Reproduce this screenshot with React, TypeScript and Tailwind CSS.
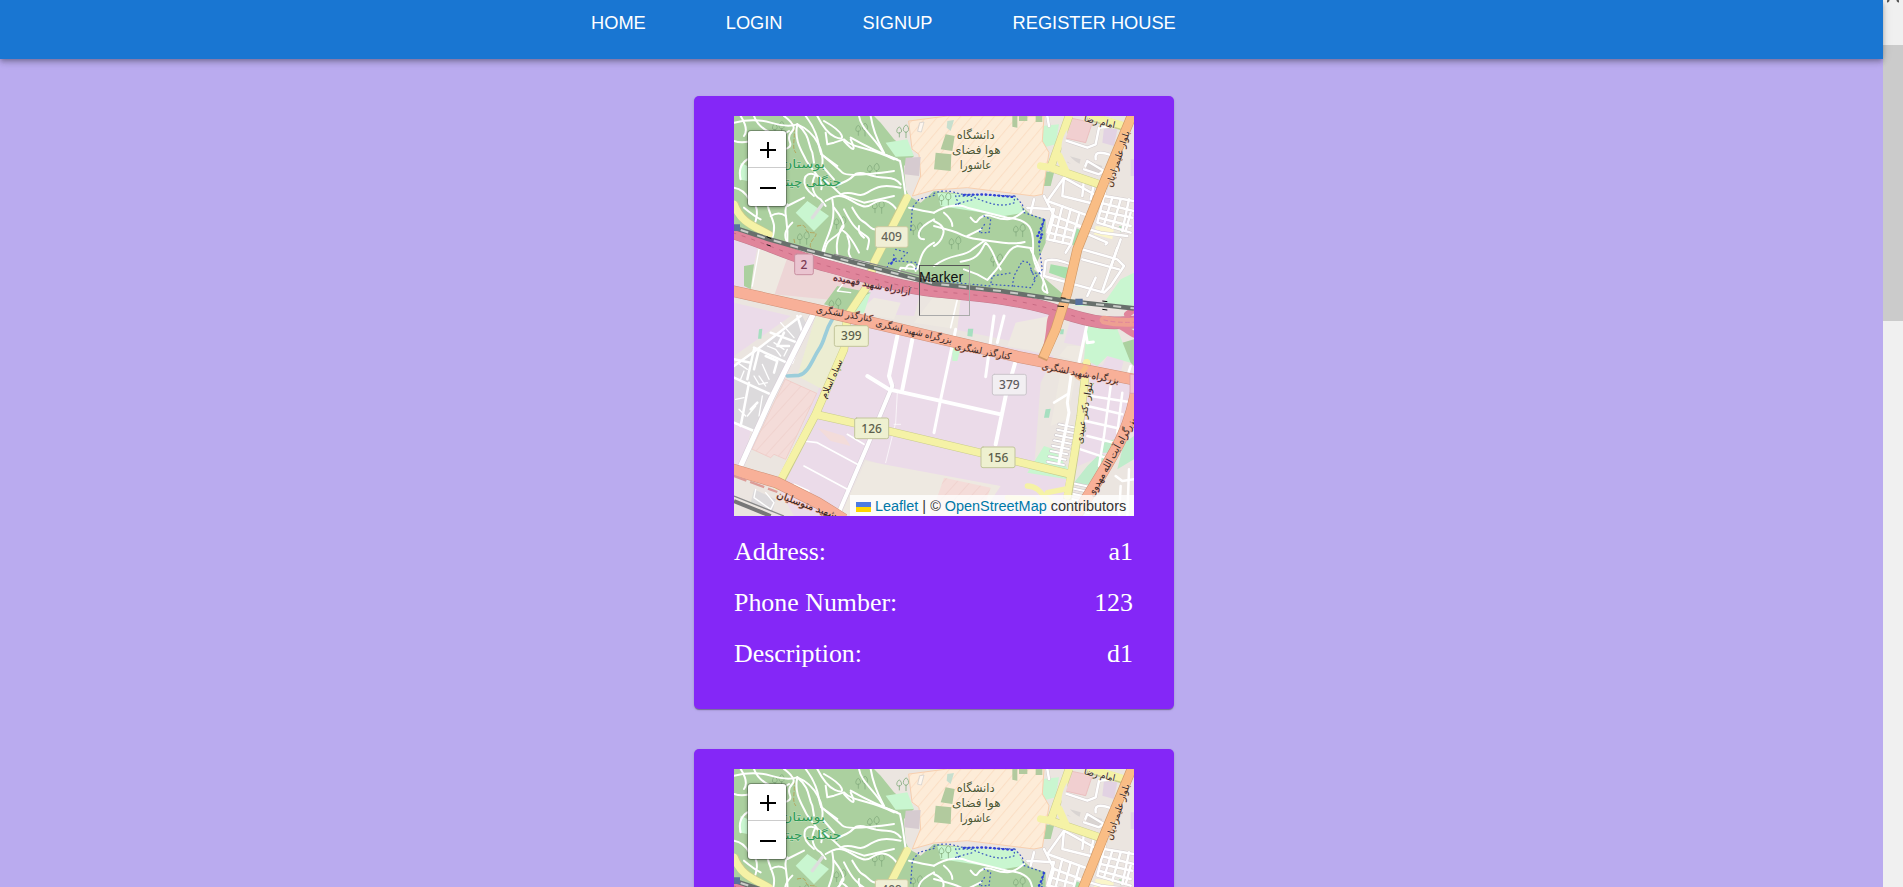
const trails = [
  "M0 20 Q60 5 110 20 T190 25", "M0 75 C40 90 60 60 85 85 S140 95 150 60", "M20 0 L45 40 L30 60", "M60 0 C70 30 100 50 140 60 L165 45",
  "M150 0 L190 30 L160 60 L175 95 L150 100", "M190 25 C180 70 200 100 215 130 S270 190 262 220", "M190 25 C250 50 270 110 265 150 L300 190",
  "M190 25 C230 60 220 80 235 110 L240 140", "M215 0 C260 60 250 90 262 115 L310 150", "M250 0 L275 50 L330 75 L315 40 L270 15",
  "M275 50 L280 85 L300 80 L330 70 C360 100 400 90 480 130", "M330 75 L375 125 L350 70", "M375 0 C380 40 430 70 450 115 L498 135 L505 170 L515 240",
  "M410 0 C420 60 440 90 450 110", "M350 65 L420 105 L490 130", "M262 115 L310 155 L340 185 L480 165", "M300 210 L345 195 L370 165 L430 185 L485 185 L500 205",
  "M320 235 C360 220 370 250 400 230 S450 205 500 215", "M240 240 C190 200 215 165 240 175 S300 215 320 235 L390 260 L480 240",
  "M245 175 C225 210 240 240 260 250 L275 270", "M275 255 L300 240 L330 240 L370 265 L400 275 L435 250 L475 260 L495 290", "M295 250 C310 330 270 370 265 410",
  "M300 275 L335 320 L320 350 L290 370 L275 385 L268 420", "M330 280 L350 320 L380 350 L405 365 L405 380 L400 400", "M355 275 L375 310 L395 320 L420 345 L440 340",
  "M320 340 L345 350 L375 410", "M325 330 C300 380 310 410 312 430", "M340 360 L350 385 L340 415 L360 440", "M375 330 L370 350 L390 365", "M100 265 C110 310 130 320 115 365",
  "M160 265 C145 290 165 310 160 380", "M65 270 L75 290 L60 330", "M175 320 C150 345 150 360 160 380", "M160 270 L210 245",
  "M40 130 L10 150 L20 190", "M0 215 L30 220 L45 250", "M30 275 L60 300 L80 310", "M265 425 L310 430 L415 440", "M110 300 L135 285 L155 300",
  "M525 275 L570 285 L600 290", "M600 290 C640 265 680 265 700 275 L820 305 C890 310 900 340 897 400 S935 480 940 530", "M710 305 L725 325 L735 305 L760 295 L800 310 L840 310 L870 285",
  "M600 330 L660 345 L700 365 L765 375 L850 385 L872 378", "M600 390 L620 380 L635 330 L600 315", "M630 290 L655 310 L655 330", "M700 360 L740 340",
  "M600 450 C650 410 690 425 715 400 L750 375", "M680 437 C740 430 740 400 755 380 C780 400 780 430 800 460", "M690 460 L730 475 L760 492 C820 430 815 400 850 390 L895 397",
  "M940 530 L920 525 L935 490 L890 400", "M600 310 L560 330 L550 370 L570 370", "M600 380 C560 400 560 430 550 460 L500 455 L495 470", "M515 460 C520 440 540 440 545 465",
];

/* Rounds the corners of a straight-segment path; paths with curves pass through. */
function smooth(d: string) {
  if (/[CQST]/.test(d)) return d;
  const n = (d.match(/-?\d+/g) ?? []).map(Number);
  const pts: number[][] = [];
  for (let i = 0; i < n.length; i += 2) pts.push([n[i], n[i + 1]]);
  if (pts.length < 3) return d;
  let out = `M${pts[0][0]} ${pts[0][1]}`;
  for (let i = 1; i < pts.length - 1; i++) {
    const last = i === pts.length - 2;
    const ex = last ? pts[i + 1][0] : (pts[i][0] + pts[i + 1][0]) / 2;
    const ey = last ? pts[i + 1][1] : (pts[i][1] + pts[i + 1][1]) / 2;
    out += ` Q${pts[i][0]} ${pts[i][1]} ${ex} ${ey}`;
  }
  return out;
}

const streets = [
  "M940 0 L945 30", "M985 70 L1060 95 L1085 85 L1095 35 L1150 30", "M1085 130 C1080 100 1110 110 1140 120", "M1050 160 L1060 135 L1110 165 L1095 175 Z",
  "M940 255 L990 185 L1090 240", "M990 185 L985 240 L1085 265", "M940 255 L1065 300", "M1050 190 L1045 240", "M880 275 L960 280 L940 350",
  "M900 250 L890 290", "M930 240 L960 300 L940 370 L1010 385 L995 410", "M960 300 L1040 330", "M950 325 L1020 345", "M945 350 L1010 365",
  "M985 270 L960 375", "M1010 280 L985 380", "M1035 295 L1010 385", "M1080 205 L1070 250", "M1120 200 L1110 240 L1200 255",
  "M1110 240 L1090 320 L1190 350", "M1105 262 L1200 285", "M1100 285 L1195 305", "M1095 305 L1190 330", "M1135 245 L1110 325", "M1160 250 L1135 335",
  "M1185 250 L1165 345", "M1050 350 L1120 380 L1115 385", "M1045 400 L1150 430 L1170 450 L1130 510 L1110 530 L930 480",
  "M1045 430 L1155 460", "M1160 370 L1130 455", "M1150 395 L1105 525", "M1085 485 L1060 540", "M930 480 L935 435 C950 425 990 435 1020 450",
  "M1030 330 L1100 350 L1180 360", "M1190 290 L1175 345",
];

const lowerStreets = [
  "M1040 1000 L1130 1030", "M1060 960 L1140 980", "M1055 915 L1165 940", "M1060 870 L1165 895", "M1070 840 L1200 860",
  "M1130 810 L1110 960 L1095 1050", "M1165 830 L1150 950", "M1160 1110 L1155 1200", "M1145 1080 L1165 1095 L1200 1090", "M1185 1060 L1180 1200",
  "M960 860 L1000 835", "M1190 750 L1180 780",
];

const comb = Array.from({ length: 9 }, (_, i) => `M${975 - i * 5} ${925 + i * 16} l50 10`);
const combLow = Array.from({ length: 6 }, (_, i) => `M1010 ${1100 + i * 16} l55 12`);

const blocks = [
  "M0 750 L70 700 L200 600", "M0 785 L110 835 L140 800", "M0 920 L60 945", "M60 700 L40 790", "M60 695 L170 745", "M110 650 L190 680",
  "M20 930 L45 800", "M0 730 L50 740", "M75 700 L60 760", "M190 600 L205 650 L175 740", "M95 720 L130 735 L120 770", "M50 880 L70 860", "M150 650 L130 690 L165 690",
];

const trees = [[125, 35], [375, 40], [498, 45], [410, 160], [425, 272], [200, 365], [310, 320], [540, 338], [625, 248], [848, 342], [655, 380], [780, 432], [295, 565]];

function Tree({ x, y }: { x: number; y: number }) {
  return (
    <path
      d={`M${x} ${y} m-2 18 l0 -12 m0 0 q-10 2 -7 -10 q7 -16 13 0 q3 9 -6 10 M${x + 18} ${y + 20} l0 -16 m0 0 q-11 -2 -7 -14 q8 -16 14 0 q3 12 -7 14`}
    />
  );
}

function Shield({ x, y, w, text, fill, stroke, color }: { x: number; y: number; w: number; text: string; fill: string; stroke: string; color: string }) {
  return (
    <g>
      <rect x={x - w / 2} y={y - 31} width={w} height={62} rx={6} fill={fill} stroke={stroke} strokeWidth={3} />
      <text x={x} y={y + 13} textAnchor="middle" fontSize={36} fill={color} fontWeight={500}>{text}</text>
    </g>
  );
}

function Label({ x, y, r, size = 28, text, halo = "#f4b09a", len }: { x: number; y: number; r: number; size?: number; text: string; halo?: string; len?: number }) {
  return (
    <text
      transform={`translate(${x} ${y}) rotate(${r})`}
      textAnchor="middle"
      fontSize={size}
      fontWeight={500}
      fill="#33251f"
      stroke={halo}
      strokeWidth={3}
      paintOrder="stroke"
      textLength={len}
      lengthAdjust="spacingAndGlyphs"
    >
      {text}
    </text>
  );
}

function StreetMap({ id }: { id: string }) {
  const hatch = `${id}-hatch`;
  const pinkHatch = `${id}-pink`;
  return (
    <svg viewBox="0 0 1200 1200" className="block h-[400px] w-[400px] font-['Noto_Sans','DejaVu_Sans',sans-serif]" fill="none" strokeLinecap="round" strokeLinejoin="round">
      <defs>
        <pattern id={hatch} width="26" height="26" patternUnits="userSpaceOnUse" patternTransform="rotate(40)">
          <rect width="26" height="26" fill="#fdecd8" />
          <path d="M0 0V26" stroke="#fbdfc5" strokeWidth="6" />
        </pattern>
        <pattern id={pinkHatch} width="30" height="30" patternUnits="userSpaceOnUse" patternTransform="rotate(42)">
          <rect width="30" height="30" fill="#f4dcd9" />
          <path d="M0 0V30" stroke="#efcfcb" strokeWidth="4" />
        </pattern>
      </defs>

      {/* Land use */}
      <path fill="#ebe5e0" d="M0 0H1200V1200H0Z" />
      <path fill="#ebdbe9" d="M0 370 L70 395 L45 520 L0 510ZM0 560 L170 600 L0 720ZM0 880 L60 900 L20 1080 L0 1060ZM330 600 L960 720 L920 800 L900 1060 L1000 1080 L990 1200 H600 L600 1090 L390 1030 L310 1200 H180 L130 1110 L250 830ZM400 510 L560 530 L540 600 L380 590ZM670 540 L1000 590 L950 700 L660 640ZM1010 610 L1060 625 L1040 690 L990 680ZM1050 730 L1200 780 V860 L1150 1000 L1010 1060ZM1120 720 L1170 730 L1160 770 L1100 760Z" />
      <path fill="#dcdadc" d="M0 750 L205 600 L225 640 L110 840 L70 950 L0 920ZM60 1120 L125 1150 L115 1190 L50 1160Z" />
      <path fill="#edd5d6" d="M155 410 L430 490 L380 560 L120 535Z" />
      <path fill="#eee9e1" d="M75 400 L160 425 L120 540 L45 520ZM395 1035 L800 1110 L740 1200 H320ZM420 545 L500 560 L480 610 L370 590ZM985 740 L950 930 L1000 910 L1030 750ZM845 620 L950 600 L930 710 L820 690ZM600 540 L680 550 L670 640 L540 620ZM1000 690 L1050 690 L1040 740 L975 720Z" />
      <path fill="#abd09f" d="M0 0H420L440 20L480 70L540 120L510 150L515 220L525 240L560 260L600 225L840 250L890 295L935 310V380L900 460L1000 545L990 555L600 500L430 460L250 405L100 365L0 335Z" />
      <path fill="#abd09f" d="M310 510 L410 530 L345 590 L270 565ZM30 450 L60 445 L50 520 L30 510ZM930 165 L960 170 L950 210 L920 210ZM1165 680 L1200 670 V750 L1160 710Z" />
      <path fill="#ecedd2" d="M245 600 L350 620 L330 700 L265 820 L190 780Z" />
      <path fill="#c9f6d0" d="M455 80 L520 70 L540 120 L485 122ZM220 255 L285 300 L240 345 L185 290ZM20 140 L40 150 L40 195 L15 190ZM610 230 L850 245 L870 290 L810 300 L620 270ZM925 30 L975 25 L965 85 L925 95ZM1060 610 L1100 600 L1150 640 L1190 740 L1120 720 L1090 750 L1050 730ZM1200 470 V570 L1010 570 L1110 560 L1160 490ZM930 990 L960 1000 L1010 1070 L1000 1090 L880 1070ZM380 545 L410 530 L390 590 L340 600ZM655 690 L680 695 L670 735 L655 735Z" />
      <path fill="#bfeccb" d="M1060 1050 L1100 1010 L1140 1040 L1090 1110 L1020 1100ZM1170 980 L1200 960 V1030 L1150 1060ZM1110 980 L1140 970 L1130 1010 L1100 1010Z" />
      <path fill="#a6dfc0" d="M702 638 L718 638 L715 662 L700 660ZM980 640 L990 640 L988 655 L978 655ZM935 880 L950 878 L945 905 L930 905ZM75 640 L85 638 L82 668 L72 668ZM75 965 L88 980 L70 980Z" />
      <path fill="#a8dfac" d="M950 445 L1005 455 L1000 490 L945 470ZM1025 335 L1045 345 L1035 395 L1010 385ZM1155 330 L1165 332 L1160 350ZM1080 260 L1092 265 L1070 295 L1060 290Z" />
      <path fill="#fbf6cb" d="M1085 330 L1140 335 L1135 370 L1080 355Z" />
      <path fill={`url(#${hatch})`} stroke="#f8cfae" strokeWidth="3" d="M525 15 L640 0 H930 L925 75 L945 110 L925 235 L900 240 L700 215 L600 222 L535 240 L560 180 L555 115 L535 100Z" />
      <path fill="#b2ca9e" d="M635 55 L662 60 L655 105 L620 100ZM605 110 L652 115 L650 165 L600 160ZM835 0 H850 V35 L835 32ZM855 0 H880 V15 H855ZM905 0 H925 V18 H905Z" />
      <path fill="#c7dfce" d="M640 15 L660 12 L650 45 L638 35Z" />
      <path fill="#fff" fillOpacity=".6" stroke="#ccc" strokeWidth="2" d="M558 20 L570 18 L562 48 L552 46Z" />
      <path fill="#d6cbd0" d="M515 125 L560 123 L555 180 L510 175Z" />
      <path fill="#f1cfd0" stroke="#e8b3b3" strokeWidth="2" d="M1005 5 L1075 20 L1055 80 L990 65Z" />
      <path fill="#e2d2e3" d="M1110 35 L1150 40 L1140 90 L1105 80ZM1190 130 H1200 V180 H1190Z" />
      <path fill="#d9d4d2" d="M1005 120 L1040 130 L1035 150 L1000 140ZM1060 135 L1105 150 L1095 175 L1050 160Z" />
      <path fill={`url(#${pinkHatch})`} stroke="#f0c4c0" strokeWidth="2" d="M155 790 L248 832 L155 1030 L120 1015 L110 1025 L55 1000Z" />
      <path fill="#f3dcda" d="M250 935 L330 960 L350 990 L290 975Z" />
      <path fill={`url(#${pinkHatch})`} d="M630 1085 L770 1115 L740 1200 H590Z" />

      {/* Forest details */}
      <g stroke="#86ad80" strokeWidth="2.5">
        {trees.map(([x, y], i) => <Tree key={i} x={x} y={y} />)}
      </g>
      <g stroke="#b4a45c" strokeWidth="3" strokeDasharray="10 7">
        <path d="M175 20 C190 60 170 90 185 110M190 330 C230 320 200 350 235 350S210 380 235 400M180 370 L190 420M210 395 L225 420" />
      </g>
      <g stroke="#fff" strokeWidth="6">
        {trails.map((d) => <path key={d} d={smooth(d)} />)}
      </g>
      <path d="M235 305 L265 265" stroke="#ddd" strokeWidth="10" />
      <g stroke="#3f5cc0" strokeWidth="4" strokeDasharray="2 10">
        <path d="M600 238 L555 250 L535 275 L530 345M600 232 C640 215 670 235 690 235 L840 240 L842 260 C800 275 770 265 710 240 L665 240 L675 270M665 265 L700 255 L720 250M842 240 L865 265 L870 290 L930 310 L915 390 L925 460 L900 490M750 300 L770 310 L765 350 L735 350 L755 320M930 475 L895 470 L885 440 L865 435 L840 480 L835 510 L770 505 L775 480 L835 470M840 510 L890 515 L905 490 L890 460M485 400 L520 410 L495 435 L550 440 L545 460M455 465 L465 440 L490 435 L475 410M610 495 L770 510" />
      </g>
      <path stroke="#2f43d6" strokeWidth="7" strokeDasharray="2 11" d="M690 237 L750 235 L838 243M930 312 L920 340 L910 360 L925 355 L915 380M480 430 L470 445" />

      {/* Minor streets */}
      <g stroke="#d3cccd" strokeWidth="10">
        {streets.map((d) => <path key={d} d={d} />)}
      </g>
      <g stroke="#fff" strokeWidth="7.5">
        {streets.map((d) => <path key={d} d={d} />)}
        {lowerStreets.map((d) => <path key={d} d={d} />)}
        {blocks.map((d) => <path key={d} d={d} />)}
      </g>
      <g stroke="#c9c3c8" strokeWidth="9">
        {comb.concat(combLow).map((d) => <path key={d} d={d} />)}
      </g>
      <g stroke="#fff" strokeWidth="6">
        {comb.concat(combLow).map((d) => <path key={d} d={d} />)}
      </g>
      <g stroke="#fff" strokeWidth="4">
        <path d="M5 850 L30 845M10 740 L40 760M85 745 L105 790M75 780 L95 810M120 680 L150 700M65 870 L40 900M15 880 L35 900M85 840 L75 900M140 620 L180 665M65 1120 L60 1145 L110 1180 L120 1160 L95 1130M60 780 L75 805 L100 800M100 690 L125 700 L140 720M30 765 L20 790M150 720 L160 700" />
        <path d="M75 400 L55 510M310 525 L350 530 M330 500 L310 525" />
      </g>
      <g stroke="#d6cbd6">
        <path strokeWidth="19" d="M235 600 L110 850 L20 1050" />
        <path strokeWidth="15" d="M475 810 L400 990 L310 1200" />
      </g>
      <g stroke="#fff">
        <path strokeWidth="16" d="M235 600 L110 850 L20 1050" />
        <path strokeWidth="12" d="M490 660 L465 780 L475 810 L400 990 L310 1200M400 780 L465 820 L600 850 L800 895M845 735 L815 840 L785 985M535 670 L505 820" />
        <path strokeWidth="9" d="M665 640 L620 850 L600 950M780 600 L755 782M810 600 L790 680M1060 620 L1035 740M1055 650 L1060 680 L1078 678M1015 750 L1000 860 L1005 890 L975 1040" />
        <path strokeWidth="5" d="M210 975 L250 980 L370 1045M210 1050 L340 1120M180 1105 L225 1125 L220 1140 L170 1125M340 955 L390 985M670 550 L650 635" />
        <path strokeWidth="3" strokeOpacity=".7" d="M490 830 L485 920 L455 1040M500 925 L480 925" />
      </g>
      <path stroke="#9bcdda" strokeWidth="11" d="M295 610 C270 650 275 670 255 700 S225 770 195 778 L160 780" />

      {/* Yellow roads */}
      <g stroke="#c9cc8c" strokeWidth="25" strokeLinecap="butt">
        <path d="M520 240 L420 440 L400 510 L340 600 L330 700 L245 895 L130 1115M245 895 L400 930 L1010 1075M1058 740 L1040 900 L1000 1150M0 260 C20 320 60 330 110 358M1005 0 L950 155 L1110 210M1060 0 L1180 35" />
      </g>
      <g stroke="#f5f2a6" strokeWidth="22">
        <path d="M520 245 L420 440 L400 510 L340 600 L330 700 L245 895 L130 1110M245 895 L400 930 L1000 1072M1058 740 L1040 900 L1000 1140M0 265 C20 320 60 330 105 356M1005 0 L950 155 L1105 208M920 150 L950 155M975 120 L995 165M1070 0 L1180 32" />
        <path strokeWidth="16" d="M880 1110 C920 1110 930 1150 950 1160M940 1130 L1000 1118M820 1145 L900 1150" />
      </g>
      <path fill="#ebe5e0" d="M1000 40 C970 90 980 130 1020 150 L1060 160 L1050 150 C1000 130 985 90 1000 55Z" />

      {/* Motorway */}
      <path stroke="#c27a8c" strokeWidth="38" strokeLinecap="butt" d="M-5 350 C80 375 170 420 280 450 S500 515 600 525 S850 545 980 588 S1140 620 1205 618" />
      <path stroke="#e0859b" strokeWidth="35" strokeLinecap="butt" d="M-5 350 C80 375 170 420 280 450 S500 515 600 525 S850 545 980 588 S1140 620 1205 618" />
      <path stroke="#e0859b" strokeWidth="20" d="M985 595 C930 590 960 620 935 700M1150 625 C1170 635 1190 650 1200 655M1180 595 L1200 580" />
      <path stroke="#c2657e" strokeWidth="2.5" strokeDasharray="12 18" strokeLinecap="butt" d="M-5 350 C80 375 170 420 280 450 S500 515 600 525 S850 545 980 588 S1140 620 1205 618" />
      <path stroke="#ee9f92" strokeWidth="26" d="M1110 612 Q1150 622 1210 618" />
      <path stroke="#e0859b" strokeWidth="3" strokeDasharray="12 10" d="M1110 612 Q1150 622 1210 618" />

      {/* Trunk and primary roads */}
      <g strokeLinecap="butt">
        <path stroke="#cf9077" strokeWidth="35" d="M-5 525 L250 582 L850 722 L1205 792M-5 1060 L130 1100 L250 1160 L330 1210M1210 800 C1190 960 1120 1040 1020 1210" />
        <path stroke="#f8b098" strokeWidth="32" d="M-5 525 L250 582 L850 722 L1205 792M-5 1060 L130 1100 L250 1160 L330 1210M1210 800 C1190 960 1120 1040 1020 1210" />
        <path stroke="#d09a68" strokeWidth="30" d="M1195 -5 L1110 200 L1030 400 L1000 530 L965 640 L925 730" />
        <path stroke="#f9bd85" strokeWidth="26" d="M1195 -5 L1110 200 L1030 400 L1000 530 L965 640 L928 725" />
        <path stroke="#dc9c97" strokeWidth="7" d="M-5 1078 L130 1128" strokeDasharray="45 12" />
        <path stroke="#f9bd85" strokeWidth="15" d="M1030 790 L1058 750" />
      </g>

      {/* Railway */}
      <g strokeLinecap="butt">
        <path stroke="#68706c" strokeWidth="14" d="M0 335 L100 368 L230 405 L400 450 L600 503 L800 525 L1000 555 L1200 577" />
        <path stroke="#c9ccc8" strokeWidth="6" strokeDasharray="24 28" d="M20 342 L100 368 L230 405 L400 450 L600 503 L800 525 L1000 555 L1200 577" />
        <path stroke="#888" strokeWidth="4" d="M300 415 L400 440 L600 490M0 1140 L150 1200" />
        <path stroke="#777" strokeWidth="12" d="M0 1155 L110 1200" />
        <path stroke="#111" strokeWidth="3" d="M98 362 L112 368M98 386 L110 390M980 545 L995 547M970 570 L990 572M1105 555 L1120 557M1105 580 L1120 582" />
        <path fill="#58719e" d="M0 325 H18 V345 H0ZM1024 548 H1046 V567 H1024Z" />
      </g>

      {/* Place names */}
      <g fontSize="36" fill="#4d5733" stroke="#fdf1e2" strokeWidth="4" paintOrder="stroke" textAnchor="middle">
        <text x="725" y="70" textLength="114" lengthAdjust="spacingAndGlyphs">دانشگاه</text>
        <text x="727" y="115" textLength="146" lengthAdjust="spacingAndGlyphs">هوا فضای</text>
        <text x="725" y="160" textLength="96" lengthAdjust="spacingAndGlyphs">عاشورا</text>
      </g>
      <g fontSize="37" fill="#2c9a55" stroke="#c7dfc0" strokeWidth="3" paintOrder="stroke" textAnchor="middle">
        <text x="208" y="155" textLength="130" lengthAdjust="spacingAndGlyphs">بوستان</text>
        <text x="216" y="209" textLength="210" lengthAdjust="spacingAndGlyphs">جنگلی چیتگر</text>
      </g>
      <Label x={412} y={515} r={11} text="آزادراه شهید فهمیده" halo="#e597a7" len={236} />
      <Label x={330} y={603} r={10} text="کنارگذر لشگری" len={172} />
      <Label x={538} y={656} r={13} text="بزرگراه شهید لشگری" len={235} />
      <Label x={745} y={715} r={11} text="کنارگذر لشگری" len={172} />
      <Label x={1038} y={781} r={11} text="بزرگراه شهید لشگری" len={235} />
      <Label x={1095} y={26} r={13} text="امام رضا" halo="#f3ecd0" len={95} />
      <Label x={1160} y={132} r={-72} text="بلوار علیمرادیان" halo="#f9cfa7" len={175} />
      <Label x={301} y={792} r={-66} text="سپاه اسلام" halo="#f3f1bd" len={125} />
      <Label x={1060} y={892} r={-80} text="بلوار دکتر عبیدی" halo="#f0eebd" len={188} />
      <Label x={1142} y={1028} r={-61} text="بزرگراه آیت الله مهدوی" size={30} len={265} />
      <Label x={215} y={1176} r={20} text="شهید متوسلیان" size={30} len={190} />

      {/* Route numbers */}
      <Shield x={210} y={445} w={56} text="2" fill="#eac4d0" stroke="#c98fa0" color="#7a3a52" />
      <Shield x={473} y={363} w={98} text="409" fill="#f0efd5" stroke="#cdcba0" color="#65655a" />
      <Shield x={352} y={660} w={102} text="399" fill="#eef0d0" stroke="#c2c59b" color="#5c604c" />
      <Shield x={413} y={937} w={102} text="126" fill="#eef0d0" stroke="#c2c59b" color="#5c604c" />
      <Shield x={826} y={806} w={102} text="379" fill="#f2eff2" stroke="#cac5cb" color="#5f5c60" />
      <Shield x={792} y={1024} w={102} text="156" fill="#eef0d0" stroke="#c2c59b" color="#5c604c" />
      <path fill="#f0c4cc" stroke="#d79ba5" strokeWidth="2" d="M1210 775 H1188 V832 H1210Z" />
    </svg>
  );
}

function HouseCard({ id, address, phone, description }: { id: string; address: string; phone: string; description: string }) {
  const rows = [
    ["Address:", address],
    ["Phone Number:", phone],
    ["Description:", description],
  ];
  return (
    <article className="h-[613px] w-[480px] shrink-0 rounded-[5px] bg-[#8427f7] px-10 pt-5 shadow-[0_2px_1px_-1px_rgba(0,0,0,0.2),0_1px_1px_rgba(0,0,0,0.14),0_1px_3px_rgba(0,0,0,0.12)]">
      <div className="relative h-[400px] w-[400px] overflow-hidden bg-[#ddd]">
        <StreetMap id={id} />
        <div className="absolute top-[149px] left-[185px] h-[51px] w-[51px] border border-t-[#555] border-r-[#aaa] border-b-[#aaa] border-l-[#555] font-['Liberation_Sans',sans-serif] text-[14.2px] leading-[22px] text-[#111]">
          <span className="-ml-px">Marker</span>
        </div>
        <div className="absolute top-[15px] left-[14px] flex w-[38px] flex-col rounded-[3px] bg-white shadow-[0_0_0_1px_rgba(0,0,0,0.25),0_1px_4px_rgba(0,0,0,0.4)]">
          <button className="flex h-[37px] items-center justify-center border-b border-[#ccc] pt-px pl-[2px]" aria-label="Zoom in">
            <svg viewBox="0 0 16 16" className="h-4 w-4" stroke="#000" strokeWidth="2"><path d="M0 8H16M8 0V16" /></svg>
          </button>
          <button className="flex h-[38px] items-center justify-center pt-[2px] pl-[2px]" aria-label="Zoom out">
            <svg viewBox="0 0 16 16" className="h-4 w-4" stroke="#000" strokeWidth="2"><path d="M0 8H16" /></svg>
          </button>
        </div>
        <div className="absolute right-0 bottom-0 flex h-[21px] w-[284px] items-center bg-white/80 pt-[2px] pl-[6px] font-['Liberation_Sans',sans-serif] text-[14.45px] whitespace-pre text-[#333]">
          <svg viewBox="0 0 15 10" className="mr-[4px] h-[10px] w-[15px]"><path fill="#4c7be1" d="M0 0h15v5H0z" /><path fill="#ffd500" d="M0 5h15v5H0z" /></svg>
          <span className="text-[#0078a8]">Leaflet</span> | © <span className="text-[#0078a8]">OpenStreetMap</span> contributors
        </div>
      </div>
      <dl className="flex w-[400px] flex-col pt-[11px] pr-px font-['Liberation_Serif',serif] text-[25.9px] text-white">
        {rows.map(([name, value]) => (
          <div key={name} className="flex h-[51px] items-center justify-between">
            <dt>{name}</dt>
            <dd>{value}</dd>
          </div>
        ))}
      </dl>
    </article>
  );
}

export default function App() {
  return (
    <div className="flex h-[887px] w-full overflow-hidden bg-[#baabef]">
      <div className="flex min-w-0 flex-1 flex-col">
        <header className="relative z-10 h-[59px] shrink-0 bg-[#1976d2] shadow-[0_2px_4px_-1px_rgba(0,0,0,0.2),0_4px_5px_rgba(0,0,0,0.14),0_1px_10px_rgba(0,0,0,0.12)]">
          <nav className="flex h-[46px] items-center gap-20 pl-[591px] font-['Liberation_Sans',sans-serif] text-[18.25px] text-white">
            <a>HOME</a>
            <a>LOGIN</a>
            <a>SIGNUP</a>
            <a>REGISTER HOUSE</a>
          </nav>
        </header>
        <main className="flex flex-col gap-10 pt-[37px] pl-[694px]">
          <HouseCard id="first" address="a1" phone="123" description="d1" />
          <HouseCard id="second" address="a1" phone="123" description="d1" />
        </main>
      </div>
      <div className="flex w-5 shrink-0 flex-col bg-[#f0f0f0]">
        <div className="flex h-[45px] justify-center">
          <svg viewBox="0 0 12 3" className="h-[3px] w-3" stroke="#505050" strokeWidth="2" fill="none"><path d="M0 2L2 0M12 2L10 0" /></svg>
        </div>
        <div className="h-[276px] bg-[#cbcbcb]" />
      </div>
    </div>
  );
}
